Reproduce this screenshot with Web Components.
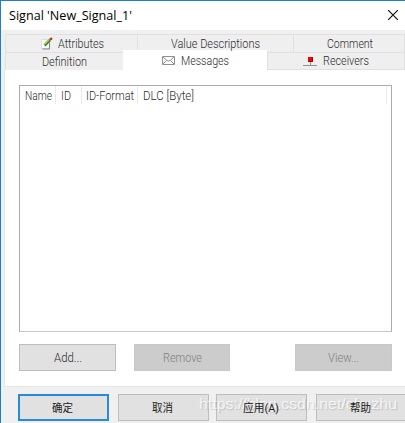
<!DOCTYPE html>
<html lang="zh-CN"><head><meta charset="utf-8"><title>Signal</title>
<style>
body{margin:0;width:405px;height:423px;overflow:hidden;font-family:Roboto,"Liberation Sans","Noto Sans CJK SC",sans-serif;font-weight:300;font-size:12px;color:#2c2c2c}
</style></head><body><signal-dialog></signal-dialog>
<script>
const def=(name,css,html)=>customElements.define(name,class extends HTMLElement{
 connectedCallback(){if(this.shadowRoot)return;const r=this.attachShadow({mode:'open'});r.innerHTML='<style>:host{box-sizing:border-box}*{box-sizing:border-box}'+css+'</style>'+html;}
});
// Text run scaled to a fixed advance width
customElements.define('fit-text',class extends HTMLElement{
 connectedCallback(){if(this.shadowRoot)return;const r=this.attachShadow({mode:'open'});
 r.innerHTML='<style>:host{display:inline-block;flex:none;white-space:pre;text-align:left}span{display:inline-block;transform-origin:0 50%}</style><span></span>';
 const s=r.querySelector('span');s.textContent=this.getAttribute('text');const w=+this.getAttribute('w');
 const n=s.getBoundingClientRect().width;this.style.width=w+'px';if(n)s.style.transform='scaleX('+w/n+')';}
});
def('title-bar',':host{display:flex;align-items:center;justify-content:space-between;height:29px;background:#fff;padding:0 7px 0 8px;font:12px "Open Sans","Noto Sans",sans-serif;color:#000}fit-text{margin-top:-1px}svg{margin-top:-1px}',
 '<fit-text text="Signal \'New_Signal_1\'" w="123"></fit-text><svg width="10" height="10"><path d="M0 0L10 10M10 0L0 10" stroke="#111" stroke-width="1.2"/></svg>');
def('tab-item',':host{display:flex;height:18px;background:#efefef;border:1px solid #e0e0e0;border-width:1px 0 0 1px;padding-left:var(--p,0);align-items:center}:host([last]){border-right-width:1px}:host([selected]){background:#fff;border-color:#fff;height:20px;margin-top:-2px}:host([low]){border-bottom-width:1px}','<slot></slot>');
def('tab-row',':host{display:grid;grid-template-columns:var(--cols);height:18px}','<slot></slot>');
def('list-head',':host{display:flex;height:18px;margin-right:4px;border-right:1px solid #ececec}div{height:18px;display:flex;align-items:center;padding:1px 0 0 5px;border-right:1px solid #e8e8e8}div:last-child{border:0}',
 '<div style="width:36px"><fit-text text="Name" w="27"></fit-text></div><div style="width:26px"><fit-text text="ID" w="10"></fit-text></div><div style="width:56px;padding-left:4px"><fit-text text="ID-Format" w="48"></fit-text></div><div><fit-text text="DLC [Byte]" w="51"></fit-text></div>');
def('list-box',':host{display:block;width:373px;height:247px;background:#fff;border:1px solid #a9acb2;border-bottom-color:#c5c5ca}','<slot></slot>');
def('push-button',':host{display:flex;align-items:center;justify-content:center;width:var(--w,97px);flex:none;height:27px;background:#e1e1e1;border:1px solid #bdbdbd}:host([disabled]){background:#ccc;border-color:#c8c8c8;color:#808080}:host([primary]){border:2px solid #2b8ad8}::slotted(*){position:relative;z-index:2}','<slot></slot>');
def('signal-dialog',`:host{display:block;position:relative;width:405px;height:423px;background:#f0f0f0;border:1px solid #1a7fd4;border-width:1px 0 0 1px;overflow:hidden}
.tabs{padding:4px 0 0 4px}.panel{margin-left:3px;height:317px;background:#fff;border:solid #e5e5e5;border-width:0 0 1px 1px;padding:15px 0 0 14px}
.acts{display:flex;margin-top:12px}.foot{display:flex;padding:7px 0 0 17px;color:#222;font-weight:400;font-size:11px}.foot fit-text{margin:-2px 2px 0 0}svg{display:block;flex:none}
.mark{position:absolute;z-index:1;left:198px;top:394px;color:rgba(255,255,255,.75);font:15px "Liberation Sans",sans-serif;text-shadow:1px 1px 1px rgba(120,120,120,.3)}`,
`<title-bar></title-bar><div class="tabs">
<tab-row style="--cols:132px 156px 112px">
<tab-item style="--p:34px"><svg width="13" height="13"><path d="M1.5 2.5h8v9h-8z" fill="#fff" stroke="#ddd"/><path d="M9.5 6v6h-7" fill="none" stroke="#888"/><path d="M4.500 8.500L10 3" stroke="#238232" stroke-width="2.600"/><path d="M4 8L9 3" stroke="#a5cc36" stroke-width="1.200"/><path d="M10 2.700l2-1.500" stroke="#bd2222" stroke-width="2.300"/></svg><fit-text style="margin-left:5px" text="Attributes" w="46"></fit-text></tab-item>
<tab-item style="--p:33px"><fit-text text="Value Descriptions" w="89"></fit-text></tab-item>
<tab-item last style="--p:33px"><fit-text text="Comment" w="46"></fit-text></tab-item></tab-row>
<tab-row style="--cols:118px 144px 138px">
<tab-item style="--p:36px"><fit-text text="Definition" w="45"></fit-text></tab-item>
<tab-item selected style="--p:38px"><svg width="13" height="9"><path d="M.5.5h12v8H.5zM1 1l4 3.500q1.500 1 3 0L12 1M1 8l3.500-3.500M12 8L8.500 4.500" fill="none" stroke="#909090"/></svg><fit-text style="margin-left:6px" text="Messages" w="48"></fit-text></tab-item>
<tab-item last low style="--p:35px"><svg width="14" height="11"><path d="M0 9.500h14M7.500 6v3" stroke="#929292"/><path d="M5 1h5v5H5z" fill="#e90808"/><path d="M5 5.500h5M9.500 1v5" stroke="#b00000"/></svg><fit-text style="margin-left:6px" text="Receivers" w="46"></fit-text></tab-item></tab-row></div>
<div class="panel"><list-box><list-head></list-head></list-box><div class="acts">
<push-button><fit-text text="Add..." w="28"></fit-text></push-button><push-button disabled style="margin-left:18px;--w:96px"><fit-text text="Remove" w="39"></fit-text></push-button><push-button disabled style="margin-left:65px"><fit-text text="View..." w="31"></fit-text></push-button></div></div>
<div class="foot"><push-button primary style="--w:91px"><fit-text text="确定" w="21"></fit-text></push-button><push-button style="--w:91px;margin-left:9px"><fit-text text="取消" w="21"></fit-text></push-button><push-button style="--w:91px;margin-left:7px"><fit-text text="应用(A)" w="36"></fit-text></push-button><push-button style="--w:91px;margin-left:9px"><fit-text text="帮助" w="21"></fit-text></push-button></div>
<div class="mark"><fit-text text="https://blog.csdn.net/cfmzhu" w="198"></fit-text></div>`);
</script></body></html>
